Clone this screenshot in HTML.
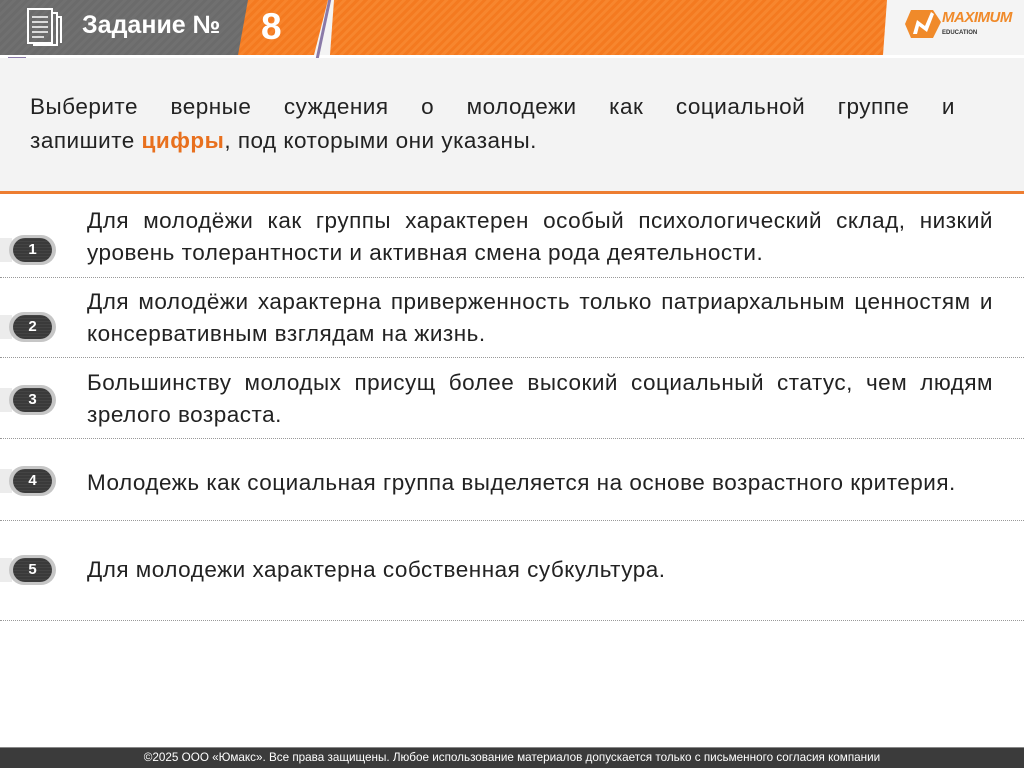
<!DOCTYPE html>
<html><head><meta charset="utf-8"><style>
body{margin:0;width:1024px;height:767px;position:relative;overflow:hidden;background:#fff;font-family:"Liberation Sans","DejaVu Sans",sans-serif;}
.hdr{position:absolute;left:0;top:0;width:1024px;height:55px;background:#f4f4f4;}
.gray{position:absolute;left:0;top:0;width:250px;height:55px;background:repeating-linear-gradient(135deg,#6b6b6b 0 3px,#707070 3px 6px);}
.or1{position:absolute;left:238px;top:0;width:90px;height:55px;background:repeating-linear-gradient(135deg,#f47a20 0 3px,#f7842c 3px 6px);clip-path:polygon(10px 0,100% 0,calc(100% - 14px) 100%,0 100%);}
.or2{position:absolute;left:330px;top:0;width:557px;height:55px;background:repeating-linear-gradient(135deg,#f47a20 0 3px,#f7862e 3px 6px);clip-path:polygon(4px 0,100% 0,calc(100% - 4px) 100%,0 100%);}
.t1{position:absolute;left:82px;top:11px;color:#fff;font-size:25px;font-weight:bold;}
.t8{position:absolute;left:261px;top:6px;color:#fff;font-size:37px;font-weight:bold;}
.q{position:absolute;left:0;top:58px;width:1024px;height:133px;background:#f3f3f3;border-bottom:3px solid #ed7d31;}
.qt{position:absolute;left:30px;width:925px;font-size:22.5px;letter-spacing:.5px;line-height:34px;color:#222;}
.it{position:absolute;left:87px;width:906px;font-size:22.5px;letter-spacing:.5px;line-height:32px;color:#222;text-align:justify;text-align-last:left;}
.sep{position:absolute;left:0;width:1024px;border-top:1px dotted #999;}
.b{position:absolute;left:9px;width:47px;height:30px;border-radius:15px;background:#c6c6c6;}
.b:before{content:"";position:absolute;left:-9px;top:3px;width:12px;height:24px;background:#ececec;z-index:-1}
.b span{position:absolute;left:4px;top:3px;width:39px;height:24px;border-radius:12px;background:repeating-linear-gradient(0deg,#3a3a3a 0 2px,#444 2px 3px);color:#fff;font-weight:bold;font-size:15px;text-align:center;line-height:24px;}
.ft{position:absolute;left:0;top:747px;width:1024px;height:20px;background:#3b3b3b;border-top:1px solid #888;color:#fff;font-size:11.7px;text-align:center;line-height:20px;}
</style></head><body>
<div class="hdr"></div>
<div class="gray"></div>
<div class="or1"></div>
<div class="or2"></div>
<svg style="position:absolute;left:26px;top:7px" width="40" height="40" viewBox="0 0 40 40" fill="none" stroke="#fff" stroke-width="2"><rect x="2" y="2" width="24" height="34"/><path d="M26 6h5v32H8v-2M31 10h4v26" /><path d="M6 10h16M6 15h16M6 20h16M6 25h16M6 30h12" stroke-width="1.5"/></svg>
<div class="t1">Задание №</div>
<div class="t8">8</div>
<div style="position:absolute;left:8px;top:57px;width:18px;height:3px;background:#8a7aa8"></div>
<div style="position:absolute;left:30px;top:58px;width:292px;height:1px;background:#8a7aa8"></div>
<div style="position:absolute;left:322px;top:0;width:3px;height:58px;background:#8a7aa8;transform:skewX(-12deg)"></div>
<svg style="position:absolute;left:903px;top:8px" width="40" height="32" viewBox="0 0 40 32"><path d="M8 2h22l8 12-8 16H8L2 16z" fill="#f08a2a"/><path d="M10 26l4-14 8 6 6-14 3 2-7 18-8-6-2 8z" fill="#fff"/></svg>
<div style="position:absolute;left:942px;top:9px;color:#f08a2a;font-weight:bold;font-style:italic;font-size:15px;letter-spacing:-.5px">MAXIMUM</div>
<div style="position:absolute;left:942px;top:30px;color:#333;font-weight:bold;font-size:6px">EDUCATION</div>
<div style="position:absolute;left:893px;top:61px;width:20px;height:3px;background:#7a9aaa"></div>
<div style="position:absolute;left:917px;top:62px;width:107px;height:1px;background:#7a9aaa"></div>
<div class="q"></div>
<div class="qt" style="top:90px;text-align:justify;text-align-last:justify">Выберите верные суждения о молодежи как социальной группе и</div>
<div class="qt" style="top:124px">запишите <b style="color:#e8701e">цифры</b>, под которыми они указаны.</div>
<div class="it" style="top:205px">Для молодёжи как группы характерен особый психологический склад, низкий уровень толерантности и активная смена рода деятельности.</div>
<div class="it" style="top:286px">Для молодёжи характерна приверженность только патриархальным ценностям и консервативным взглядам на жизнь.</div>
<div class="it" style="top:367px">Большинству молодых присущ более высокий социальный статус, чем людям зрелого возраста.</div>
<div class="it" style="top:467px">Молодежь как социальная группа выделяется на основе возрастного критерия.</div>
<div class="it" style="top:554px">Для молодежи характерна собственная субкультура.</div>
<div class="sep" style="top:277px"></div>
<div class="sep" style="top:357px"></div>
<div class="sep" style="top:438px"></div>
<div class="sep" style="top:520px"></div>
<div class="sep" style="top:620px"></div>
<div class="b" style="top:235px"><span>1</span></div>
<div class="b" style="top:312px"><span>2</span></div>
<div class="b" style="top:385px"><span>3</span></div>
<div class="b" style="top:466px"><span>4</span></div>
<div class="b" style="top:555px"><span>5</span></div>
<div class="ft">©2025 ООО «Юмакс». Все права защищены. Любое использование материалов допускается только с письменного согласия компании</div>
</body></html>
